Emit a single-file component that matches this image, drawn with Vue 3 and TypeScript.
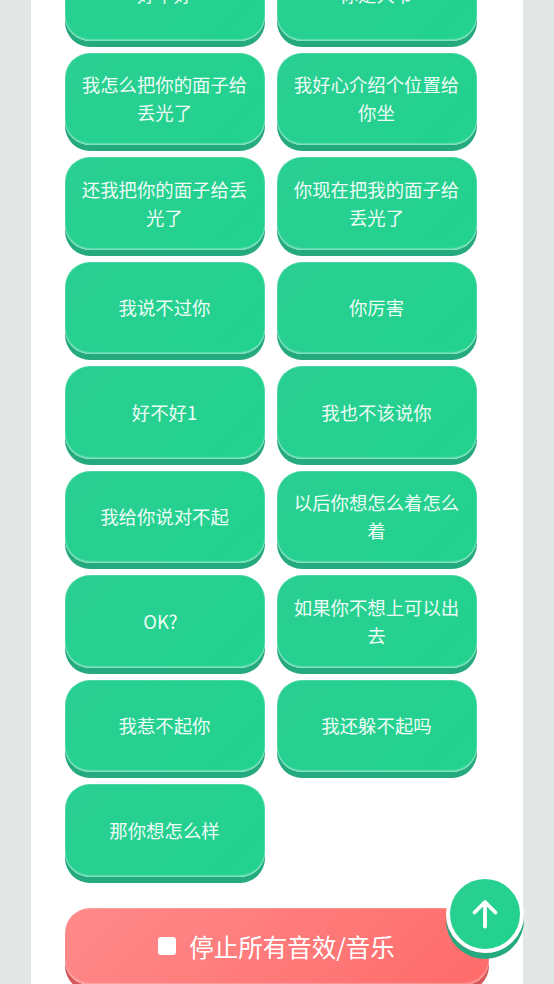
<script setup lang="ts">
const labels: string[] = [
  '好不好', '你是大爷',
  '我怎么把你的面子给丢光了', '我好心介绍个位置给你坐',
  '还我把你的面子给丢光了', '你现在把我的面子给丢光了',
  '我说不过你', '你厉害',
  '好不好1', '我也不该说你',
  '我给你说对不起', '以后你想怎么着怎么着',
  'OK?\u00a0\u00a0', '如果你不想上可以出去',
  '我惹不起你', '我还躲不起吗',
  '那你想怎么样',
]
</script>

<template>
  <div class="page">
    <main class="card">
      <div class="grid">
        <button v-for="(label, i) in labels" :key="i" class="sound">{{ label }}</button>
      </div>
      <button class="stop"><span class="stop-icon"></span><span>停止所有音效/音乐</span></button>
    </main>
    <button class="top" aria-label="top">
      <svg viewBox="0 0 28 30" width="28" height="30" fill="none" stroke="#fff" stroke-width="3.8" stroke-linecap="round" stroke-linejoin="round">
        <path d="M14 27.5V3.5M3.5 13.5 14 3l10.5 10.5" />
      </svg>
    </button>
  </div>
</template>

<style>
html, body { margin: 0; background: #e3e8e6; }
</style>

<style scoped>
.page {
  position: relative;
  height: 984px;
  overflow: hidden;
  background: #e3e8e6;
  font-family: "Noto Sans CJK SC", "Noto Sans", sans-serif;
}
.card {
  width: 492px;
  height: 984px;
  margin-left: 31px;
  padding: 0 34px;
  box-sizing: border-box;
  overflow: hidden;
  background: #fff;
}
.grid {
  display: grid;
  grid-template-columns: repeat(2, 200px);
  grid-auto-rows: 92.5px;
  gap: 12px;
  margin-top: -51.75px;
}
button { font-family: inherit; cursor: pointer; }
.sound {
  box-sizing: border-box;
  padding: 0 15px 0 14px;
  border: 0;
  border-radius: 25px;
  color: #eefcf6;
  font-size: 18.4px;
  line-height: 27.6px;
  background: linear-gradient(135deg, #29cf92, #22d28e);
  box-shadow: 0 6px 0 #25a97f, inset 0 -2px 1px rgba(255, 255, 255, 0.28), inset 0 0 0 1px rgba(255, 255, 255, 0.16);
}
.stop {
  display: flex;
  align-items: center;
  justify-content: center;
  gap: 13px;
  box-sizing: border-box;
  width: 424px;
  height: 77px;
  margin-top: 31px;
  padding: 0 1px 0 0;
  border: 0;
  border-radius: 25px;
  color: #fff;
  font-size: 24.5px;
  background: linear-gradient(135deg, #ff8a8a, #ff6b6b);
  box-shadow: 0 6px 0 #d65858, inset 0 -2px 1px rgba(255, 255, 255, 0.28), inset 0 1px 0 rgba(255, 255, 255, 0.18);
}
.stop-icon {
  width: 18px;
  height: 18px;
  border-radius: 3px;
  background: #fff;
}
.top {
  position: absolute;
  left: 446px;
  top: 875px;
  width: 78px;
  height: 78px;
  box-sizing: border-box;
  display: flex;
  align-items: center;
  justify-content: center;
  padding: 0;
  border: 4px solid #fff;
  border-radius: 50%;
  background: linear-gradient(135deg, #29cf92, #22d28e);
  box-shadow: 0 6px 0 #25a97f;
}
</style>
